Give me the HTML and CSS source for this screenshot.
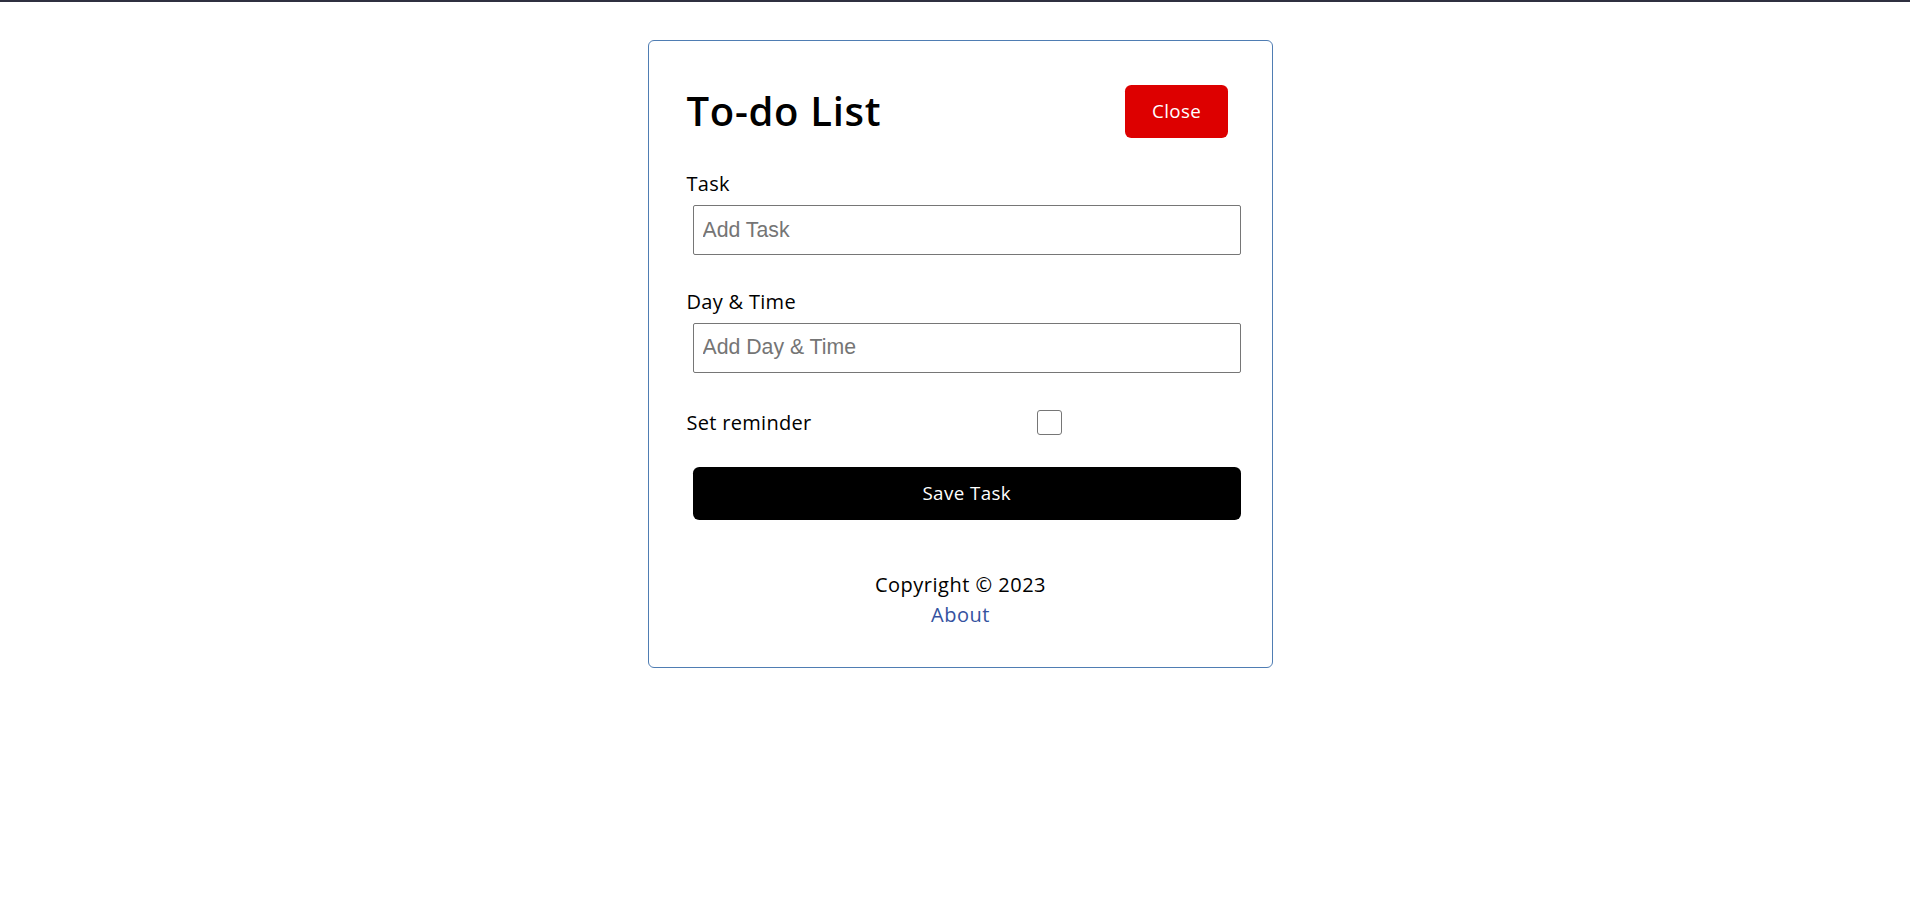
FILE: index.html
```html
<!DOCTYPE html>
<html lang="en">
<head>
<meta charset="utf-8">
<title>Task Tracker</title>
<link rel="stylesheet" href="styles.css">
</head>
<body>
<div class="topbar"></div>
<div class="container">
  <header class="header">
    <h1 class="title">To-do List</h1>
    <button class="btn btn-close">Close</button>
  </header>
  <form class="add-form">
    <div class="form-control">
      <label>Task</label>
      <input class="text-input" type="text" placeholder="Add Task">
    </div>
    <div class="form-control">
      <label>Day &amp; Time</label>
      <input class="text-input" type="text" placeholder="Add Day &amp; Time">
    </div>
    <div class="form-control form-control-check">
      <label class="check-label">Set reminder</label>
      <div class="check-wrap"><input class="check" type="checkbox"></div>
    </div>
    <button type="button" class="btn btn-block">Save Task</button>
  </form>
  <footer class="footer">
    <p>Copyright &copy; 2023</p>
    <a class="about" href="#">About</a>
  </footer>
</div>
</body>
</html>
```

FILE: styles.css
```css
* {
  box-sizing: border-box;
  margin: 0;
  padding: 0;
}

body {
  font-family: "Open Sans", "Noto Sans", sans-serif;
  background: #fff;
  color: #000;
}

.topbar {
  height: 2px;
  background: #2f3040;
}

.container {
  width: 625px;
  margin: 38px 0 37.5px calc(50% - 307px);
  min-height: 375px;
  border: 1px solid #4f7db3;
  padding: 37.5px;
  border-radius: 6px;
  overflow: auto;
}

.header {
  display: flex;
  justify-content: space-between;
  align-items: center;
  margin-bottom: 25px;
}

.title {
  font-size: 40px;
  line-height: 60px;
  font-weight: 600;
  letter-spacing: 0.7px;
}

.btn {
  display: inline-block;
  background: #000;
  color: #fff;
  border: none;
  padding: 12.5px 25px;
  margin: 6.25px;
  border-radius: 6.25px;
  font-size: 18.75px;
  line-height: 28px;
  font-family: inherit;
  letter-spacing: 0.4px;
  cursor: pointer;
}

.btn-close {
  background: #dd0000;
  padding: 12.5px 27px;
}

.btn-block {
  display: block;
  width: 100%;
}

.add-form {
  margin-bottom: 50px;
}

.form-control {
  margin: 25px 0;
  display: flow-root;
}

.form-control label {
  display: block;
  font-size: 20px;
  line-height: 30px;
  letter-spacing: 0.3px;
}

.text-input {
  display: block;
  width: 100%;
  height: 50px;
  margin: 6.25px;
  padding: 3.75px 8.75px;
  font-size: 21.25px;
  font-family: "Liberation Sans", Arial, sans-serif;
  border: 1px solid #767676;
  border-radius: 2px;
  color: #000;
}

.text-input::placeholder {
  color: #757575;
}

.form-control-check {
  display: flex;
  align-items: center;
  justify-content: space-between;
}

.form-control-check .check-label {
  flex: 1;
}

.check-wrap {
  flex: 2;
  display: flex;
  justify-content: center;
  margin: 6.25px;
}

.check {
  appearance: none;
  -webkit-appearance: none;
  width: 25px;
  height: 25px;
  border: 1px solid #767676;
  border-radius: 3px;
  background: #fff;
}

.footer {
  margin-top: 37.5px;
  text-align: center;
  font-size: 20px;
  line-height: 30px;
  letter-spacing: 0.5px;
}

.about {
  color: #34529f;
  text-decoration: none;
}
```
